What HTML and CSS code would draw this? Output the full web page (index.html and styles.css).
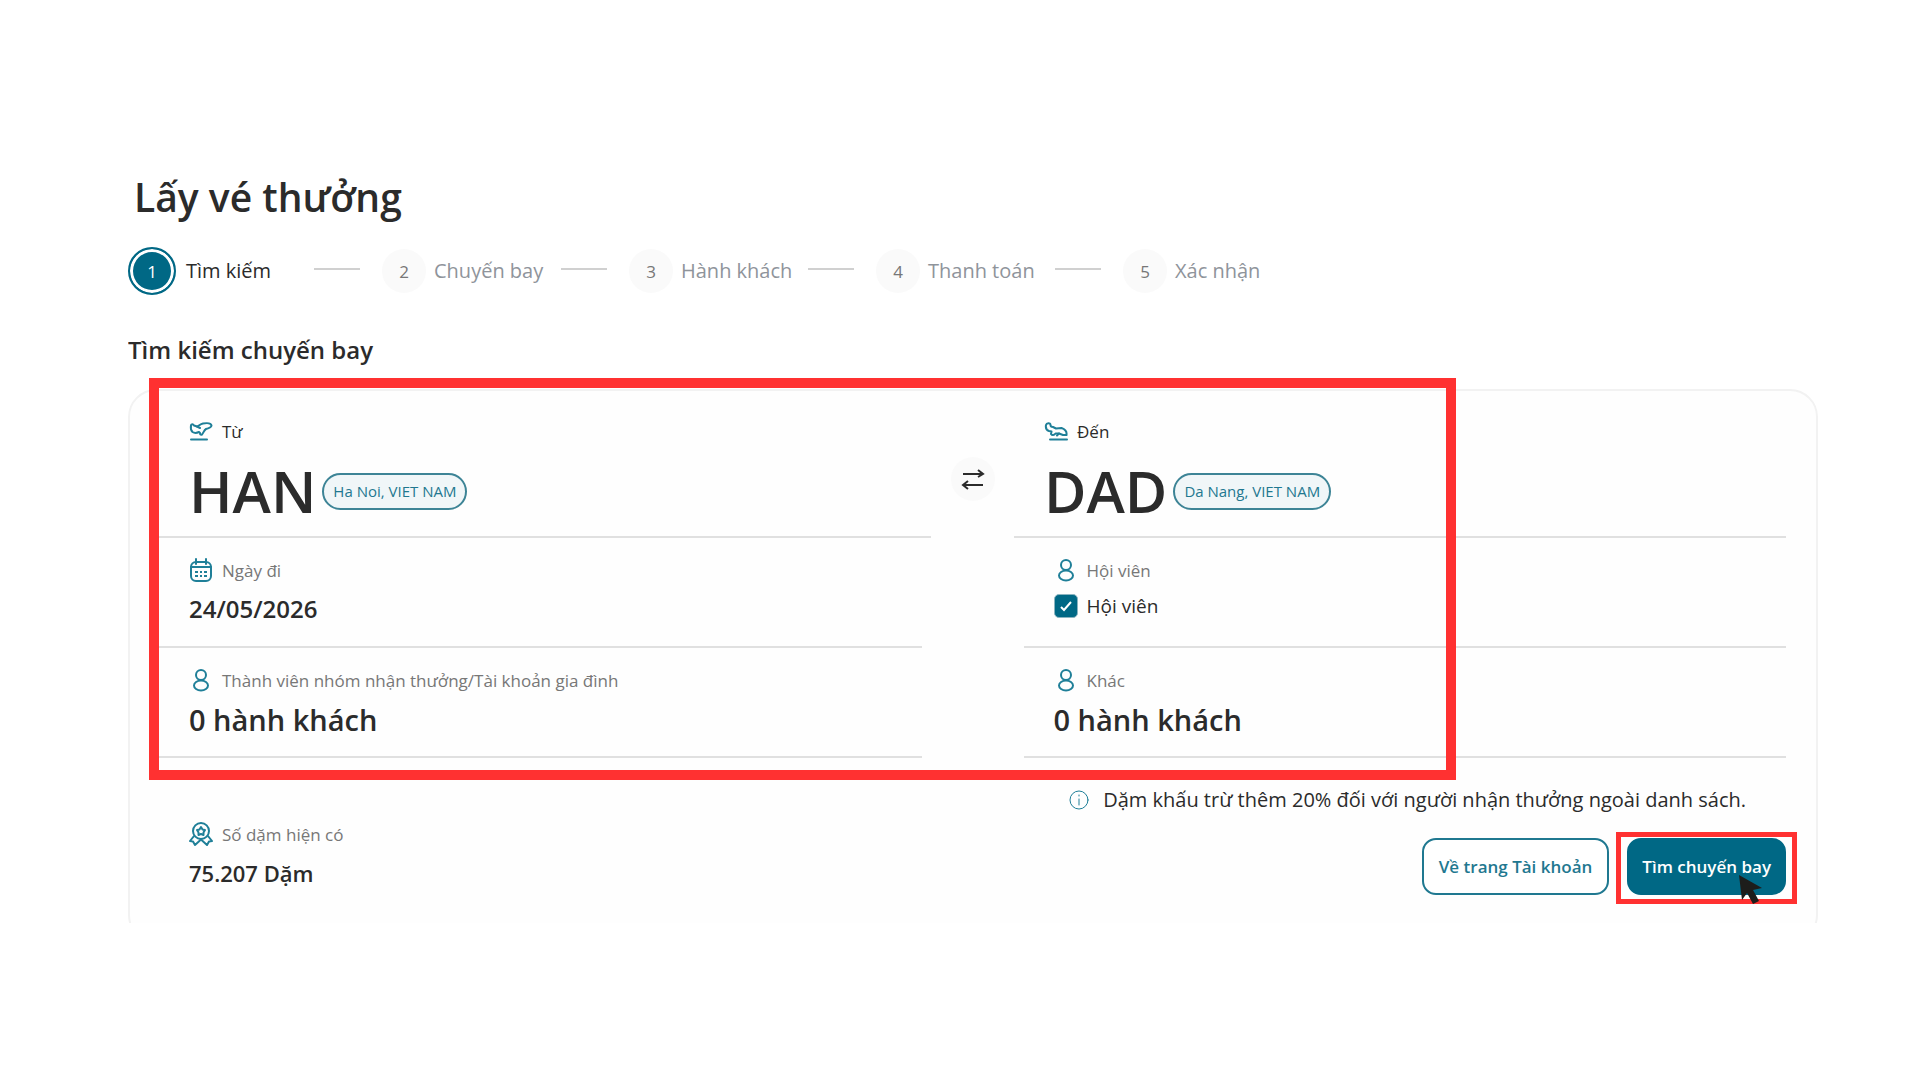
FILE: index.html
```html
<!DOCTYPE html>
<html lang="vi">
<head>
<meta charset="UTF-8">
<meta name="viewport" content="width=device-width, initial-scale=1">
<title>Lấy vé thưởng</title>
<link rel="stylesheet" href="styles.css">
</head>
<body>

<!-- Shared icons -->
<svg class="sprite" aria-hidden="true">
  <symbol id="icon-person" viewBox="0 0 24 24">
    <circle cx="12" cy="7" r="5"/>
    <ellipse cx="12" cy="17.500" rx="7" ry="5"/>
  </symbol>
</svg>

<main>
<h1>Lấy vé thưởng</h1>

<ol class="steps">
  <li class="step active"><span class="number">1</span><span class="name">Tìm kiếm</span></li>
  <li class="step"><span class="number">2</span><span class="name">Chuyến bay</span></li>
  <li class="step"><span class="number">3</span><span class="name">Hành khách</span></li>
  <li class="step"><span class="number">4</span><span class="name">Thanh toán</span></li>
  <li class="step"><span class="number">5</span><span class="name">Xác nhận</span></li>
</ol>

<section class="search">
<h2>Tìm kiếm chuyến bay</h2>

<form class="card">
  <div class="row route">
    <div class="cell">
      <div class="label dark">
        <svg class="icon" viewBox="0 0 24 24"><path d="M2 6.500C2 5 4 4.500 5 6.500L8 7.500C10 7 11 5 14 4.500C17 4 22 4 22.500 6.500C22.500 8.500 19 9.500 17 10C15 11 14.500 14 13 15.500C11.500 16 11 15.500 11 14L10 13C8 14 5 14 3.500 13C2 11.500 1.500 9 2 6.500Z"/><path d="M8 7.500L11 9"/><path d="M2 20.500H18"/></svg>
        <span>Từ</span>
      </div>
      <div class="airport"><span class="code">HAN</span><span class="city">Ha Noi, VIET NAM</span></div>
    </div>
    <button type="button" class="swap" aria-label="Đổi chiều">
      <svg viewBox="0 0 24 24"><path d="M2 7H22M17 3L22 7L17 10M22 18H2M7 14L2 18L7 22"/></svg>
    </button>
    <div class="cell">
      <div class="label dark">
        <svg class="icon" viewBox="0 0 24 24"><path d="M6.500 6C6.500 3.500 2.500 4 2 6C1.500 8.500 2.500 11 5 12L7.500 12.500L7 15C8 16.500 10 16.500 11.500 14.500L15 14.500L19 16H22.500C23 12.500 20.500 10 17.500 9L12 9.500L9 8C7.500 8 6.500 7.500 6.500 6Z"/><path d="M13 16.500L15 14.500"/><path d="M6 20.500H23"/></svg>
        <span>Đến</span>
      </div>
      <div class="airport"><span class="code">DAD</span><span class="city">Da Nang, VIET NAM</span></div>
    </div>
  </div>

  <div class="row">
    <div class="cell">
      <div class="label">
        <svg class="icon" viewBox="0 0 24 24"><rect x="2" y="4" width="20" height="19" rx="5"/><path d="M2 9H22M7 1V6M17 1V6"/><path class="dots" d="M6 14H9M11 14H13M15 14H18M6 18H9M11 18H13M15 18H18"/></svg>
        <span>Ngày đi</span>
      </div>
      <div class="value">24/05/2026</div>
    </div>
    <div class="cell">
      <div class="label">
        <svg class="icon"><use href="#icon-person"/></svg>
        <span>Hội viên</span>
      </div>
      <label class="check"><input type="checkbox" checked>Hội viên</label>
    </div>
  </div>

  <div class="row">
    <div class="cell">
      <div class="label">
        <svg class="icon"><use href="#icon-person"/></svg>
        <span>Thành viên nhóm nhận thưởng/Tài khoản gia đình</span>
      </div>
      <div class="value large">0 hành khách</div>
    </div>
    <div class="cell">
      <div class="label">
        <svg class="icon"><use href="#icon-person"/></svg>
        <span>Khác</span>
      </div>
      <div class="value large">0 hành khách</div>
    </div>
  </div>

  <div class="footer">
    <div class="miles">
      <div class="label">
        <svg class="icon" viewBox="0 0 24 24"><circle cx="12" cy="9" r="8"/><path d="M12 5L13.500 7.500L16 8L14.500 10.500V13L12 12L9.500 13V10.500L8 8L10.500 7.500Z"/><path d="M5 14L1 19L4 19.500L6 23L12 17.500L18 23L20 19.500L23 19L19 14"/></svg>
        <span>Số dặm hiện có</span>
      </div>
      <div class="value small">75.207 Dặm</div>
    </div>
    <div class="actions">
      <p class="note">
        <svg class="icon thin" viewBox="0 0 24 24"><circle cx="12" cy="12" r="9"/><path d="M12 11V17M12 7V8"/></svg>
        <span>Dặm khấu trừ thêm 20% đối với người nhận thưởng ngoài danh sách.</span>
      </p>
      <div class="buttons">
        <button type="button" class="btn">Về trang Tài khoản</button>
        <div class="target">
          <button type="submit" class="btn primary">Tìm chuyến bay</button>
          <svg class="cursor" viewBox="0 0 23 29"><path d="M0 0L23 13L14 15L20 26L14 29L8 18L3 25Z"/></svg>
        </div>
      </div>
    </div>
  </div>

  <div class="highlight"></div>
</form>
</section>
</main>

</body>
</html>
```

FILE: styles.css
```css
* {
  box-sizing: border-box;
}

body {
  margin: 0;
  background: #fff;
  color: #2b2b2b;
  font-family: "Open Sans", "Noto Sans", sans-serif;
  font-size: 17px;
}

button {
  font-family: inherit;
  cursor: pointer;
}

main {
  padding: 168px 102px 0 128px;
}

h1 {
  margin: 0 0 21px 6px;
  font-size: 39px;
  line-height: 57px;
  font-weight: 600;
}

h2 {
  margin: 0 0 22px;
  font-size: 24px;
  line-height: 34px;
  font-weight: 600;
}

.sprite {
  position: absolute;
  width: 0;
  height: 0;
}

/* Steps */
.steps {
  display: flex;
  margin: 0 0 37px;
  padding: 0;
  list-style: none;
}

.step {
  display: flex;
  align-items: center;
  gap: 8px;
  width: 247px;
  height: 50px;
  color: #8f949b;
  font-size: 20px;
}

.step.active {
  gap: 10px;
  width: 254px;
  color: #2b2b2b;
}

.step::after {
  content: "";
  width: 46px;
  height: 2px;
  margin: 0 22px 4px auto;
  background: #d0d0d0;
}

.step:last-child::after {
  display: none;
}

.name {
  padding-bottom: 2px;
}

.number {
  display: flex;
  align-items: center;
  justify-content: center;
  width: 44px;
  height: 44px;
  border-radius: 50%;
  background: #fafafa;
  color: #777;
  font-size: 17px;
}

.active .number {
  width: 48px;
  height: 48px;
  border: 2px solid #006885;
  background: #006885;
  box-shadow: inset 0 0 0 3px #fff;
  color: #fff;
}

/* Search card. The section cuts off its lower edge */
.search {
  overflow: hidden;
}

.card {
  position: relative;
  margin-bottom: -20px;
  padding: 0 30px 46px 29px;
  border: 2px solid #f2f2f2;
  border-radius: 28px;
  background: #fefefe;
}

.row {
  display: grid;
  grid-template-columns: 1fr 1fr;
  column-gap: 102px;
}

.row.route {
  grid-template-columns: 1fr 83px 1fr;
  column-gap: 0;
}

.cell {
  height: 110px;
  padding: 20px 0 0 30px;
  border-bottom: 2px solid #e0e0e0;
}

.route .cell {
  height: 147px;
  padding-top: 28px;
}

.label {
  display: flex;
  align-items: center;
  gap: 9px;
  height: 24px;
  color: #777;
}

.label.dark {
  color: #2b2b2b;
}

.icon {
  flex: none;
  width: 24px;
  height: 24px;
  fill: none;
  stroke: #1f7f98;
  stroke-width: 2;
  stroke-linecap: round;
  stroke-linejoin: round;
}

.icon.thin {
  stroke-width: 1;
}

.dots {
  stroke-linecap: butt;
}

.airport {
  display: flex;
  align-items: center;
  gap: 6px;
  margin-top: 18px;
}

.code {
  font-size: 58px;
  line-height: 60px;
  font-weight: 600;
}

.city {
  padding: 0 9px;
  border: 2px solid #3d8496;
  border-radius: 20px;
  background: #f0f6f8;
  color: #1f7890;
  font-size: 15px;
  line-height: 33px;
}

.swap {
  place-self: center;
  display: flex;
  align-items: center;
  justify-content: center;
  width: 44px;
  height: 44px;
  margin-top: 28px;
  padding: 0;
  border: 0;
  border-radius: 50%;
  background: #fafafa;
}

.swap svg {
  width: 24px;
  height: 24px;
  fill: none;
  stroke: #2b2b2b;
  stroke-width: 2;
}

.value {
  margin-top: 9px;
  font-size: 24px;
  line-height: 36px;
  font-weight: 600;
}

.value.large {
  margin-top: 10px;
  font-size: 29px;
}

.value.small {
  font-size: 22px;
}

.check {
  display: flex;
  align-items: center;
  gap: 9px;
  height: 30px;
  margin-top: 9px;
  font-size: 19px;
}

.check input {
  appearance: none;
  width: 24px;
  height: 24px;
  margin: 0;
  border: 1px solid #8ab4c0;
  border-radius: 5px;
}

.check input:checked {
  background: #006885 url("data:image/svg+xml,%3Csvg xmlns='http://www.w3.org/2000/svg' viewBox='0 0 22 22'%3E%3Cpath d='M6 12l3 3 7-8' fill='none' stroke='white' stroke-width='2'/%3E%3C/svg%3E");
}

/* Footer of the card */
.footer {
  display: flex;
  justify-content: space-between;
}

.miles {
  padding: 64px 0 0 30px;
}

.actions {
  padding-top: 28px;
}

.note {
  display: flex;
  align-items: center;
  justify-content: flex-end;
  gap: 12px;
  margin: 0 40px 24px 0;
  font-size: 20px;
  line-height: 28px;
}

.buttons {
  display: flex;
  justify-content: flex-end;
  gap: 18px;
}

.btn {
  height: 57px;
  padding: 0 15px;
  border: 2px solid #1f7890;
  border-radius: 14px;
  background: #fff;
  color: #1f7890;
  font-size: 17px;
  font-weight: 600;
}

.btn.primary {
  padding: 0 13px;
  border-color: #006885;
  background: #006885;
  color: #fff;
}

.target {
  position: relative;
}

.target::after {
  content: "";
  position: absolute;
  inset: -6px -11px -9px;
  border: 5px solid #ff3131;
  pointer-events: none;
}

.cursor {
  position: absolute;
  right: 24px;
  bottom: -9px;
  z-index: 1;
  width: 23px;
  height: 29px;
  fill: #1d1d1b;
}

.highlight {
  position: absolute;
  top: -13px;
  left: 19px;
  right: 360px;
  height: 402px;
  border: 10px solid #ff3131;
  pointer-events: none;
}
```
